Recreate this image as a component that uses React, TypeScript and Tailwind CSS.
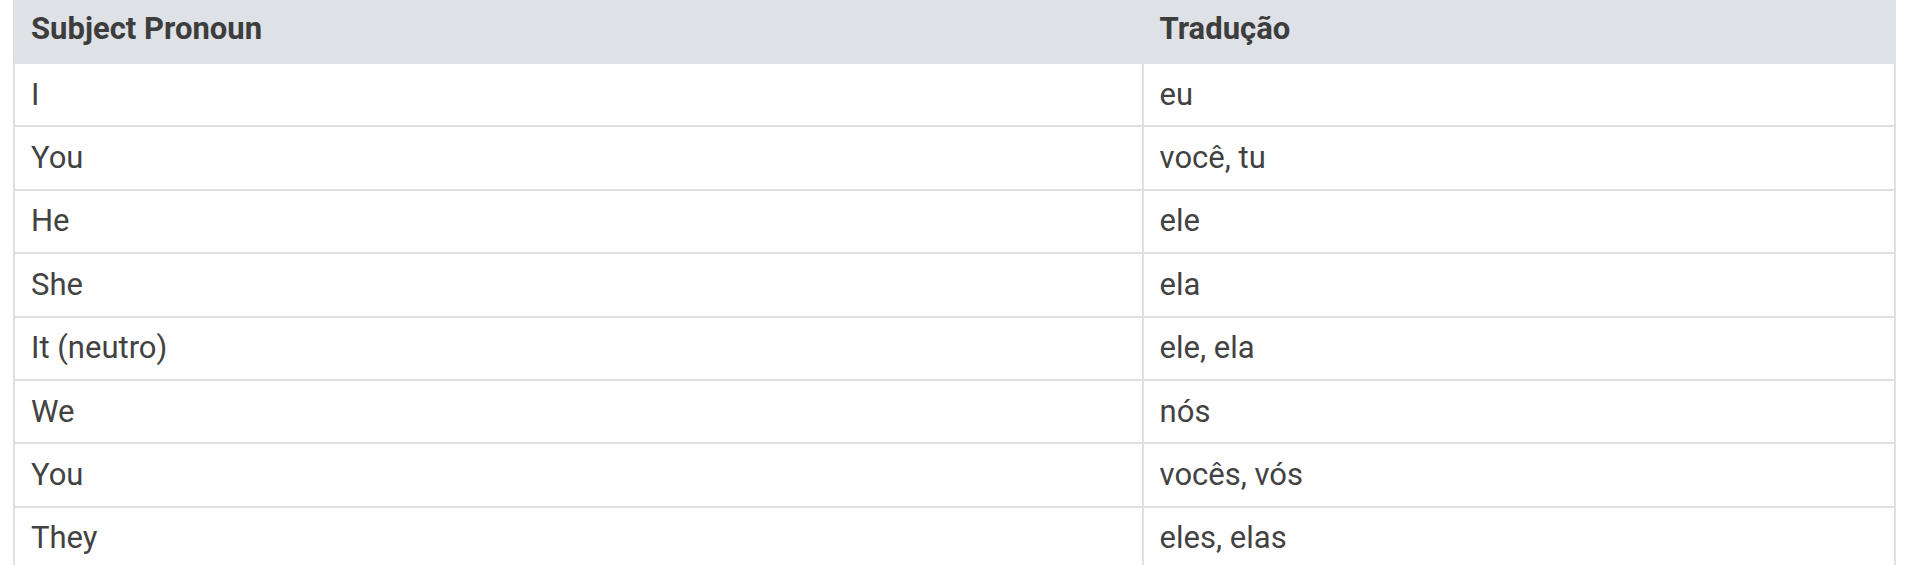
const rows: [string, string][] = [
  ['I', 'eu'],
  ['You', 'você, tu'],
  ['He', 'ele'],
  ['She', 'ela'],
  ['It (neutro)', 'ele, ela'],
  ['We', 'nós'],
  ['You', 'vocês, vós'],
  ['They', 'eles, elas'],
];

export default function App() {
  return (
    <div className="min-h-screen bg-white pl-[13px] pr-[11px] overflow-hidden" style={{ fontFamily: 'Roboto, "Liberation Sans", sans-serif' }}>
      <table className="w-full border-collapse table-fixed -mt-[3px]">
        <thead>
          <tr className="bg-[#dee1e6]">
            <th className="w-[60%] h-[66px] px-4 pb-[2px] leading-none text-left align-middle text-[31px] font-bold text-[#3d3d3d] border-x-2 border-b-2 border-[#dde0e4]">
              Subject Pronoun
            </th>
            <th className="h-[66px] px-4 pb-[2px] leading-none text-left align-middle text-[31px] font-bold text-[#3d3d3d] border-x-2 border-b-2 border-[#dde0e4]">
              Tradução
            </th>
          </tr>
        </thead>
        <tbody>
          {rows.map(([en, pt], i) => (
            <tr key={i} className="bg-white">
              <td className="h-[63.4px] px-4 pb-[1px] leading-none align-middle text-[31px] text-[#424242] border-2 border-[#e0e0e0]">{en}</td>
              <td className="h-[63.4px] px-4 pb-[1px] leading-none align-middle text-[31px] text-[#424242] border-2 border-[#e0e0e0]">{pt}</td>
            </tr>
          ))}
        </tbody>
      </table>
    </div>
  );
}
